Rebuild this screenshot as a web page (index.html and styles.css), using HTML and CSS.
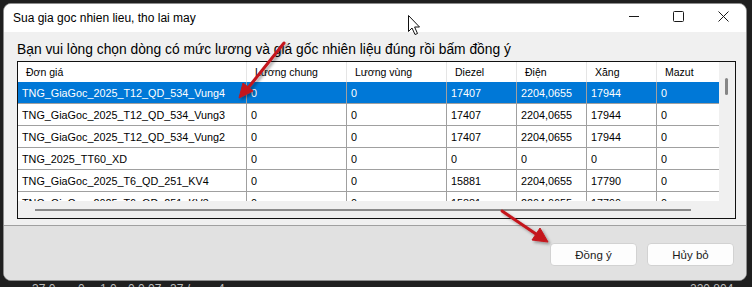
FILE: index.html
```html
<!DOCTYPE html>
<html lang="vi">
<head>
  <meta charset="UTF-8">
  <title>Sua gia goc nhien lieu, tho lai may</title>
  <link rel="stylesheet" href="styles.css">
</head>
<body>
  <div class="desk">
    <div class="window">
      <div class="titlebar">
        <span class="title">Sua gia goc nhien lieu, tho lai may</span>
        <div class="controls">
          <span class="ctl"><svg width="10" height="10" viewBox="0 0 10 10"><line x1="0" y1="4.5" x2="10" y2="4.5" stroke="#1a1a1a" stroke-width="1"/></svg></span>
          <span class="ctl"><svg width="11" height="11" viewBox="0 0 11 11"><rect x="0.5" y="0.5" width="10" height="10" rx="1" fill="none" stroke="#1a1a1a" stroke-width="1"/></svg></span>
          <span class="ctl"><svg width="11" height="11" viewBox="0 0 11 11"><path d="M0.5 0.5L10.5 10.5M10.5 0.5L0.5 10.5" stroke="#1a1a1a" stroke-width="1"/></svg></span>
        </div>
      </div>

      <div class="client">
        <p class="hint">Bạn vui lòng chọn dòng có mức lương và giá gốc nhiên liệu đúng rồi bấm đồng ý</p>
        <div class="grid">
          <div class="viewport">
            <table>
              <colgroup>
                <col class="c-name"><col class="c-wide"><col class="c-wide">
                <col class="c-num"><col class="c-num"><col class="c-num"><col class="c-num">
              </colgroup>
              <thead>
                <tr><th>Đơn giá</th><th>Lương chung</th><th>Lương vùng</th><th>Diezel</th><th>Điện</th><th>Xăng</th><th>Mazut</th></tr>
              </thead>
              <tbody>
                <tr class="selected"><td>TNG_GiaGoc_2025_T12_QD_534_Vung4</td><td>0</td><td>0</td><td>17407</td><td>2204,0655</td><td>17944</td><td>0</td></tr>
                <tr><td>TNG_GiaGoc_2025_T12_QD_534_Vung3</td><td>0</td><td>0</td><td>17407</td><td>2204,0655</td><td>17944</td><td>0</td></tr>
                <tr><td>TNG_GiaGoc_2025_T12_QD_534_Vung2</td><td>0</td><td>0</td><td>17407</td><td>2204,0655</td><td>17944</td><td>0</td></tr>
                <tr><td>TNG_2025_TT60_XD</td><td>0</td><td>0</td><td>0</td><td>0</td><td>0</td><td>0</td></tr>
                <tr><td>TNG_GiaGoc_2025_T6_QD_251_KV4</td><td>0</td><td>0</td><td>15881</td><td>2204,0655</td><td>17790</td><td>0</td></tr>
                <tr><td>TNG_GiaGoc_2025_T6_QD_251_KV3</td><td>0</td><td>0</td><td>15881</td><td>2204,0655</td><td>17790</td><td>0</td></tr>
              </tbody>
            </table>
          </div>
          <div class="vscroll"><span class="thumb-v"></span></div>
          <div class="hscroll"><span class="thumb-h"></span></div>
          <div class="corner"></div>
        </div>
      </div>

      <div class="footer">
        <button class="btn">Đồng ý</button>
        <button class="btn">Hủy bỏ</button>
      </div>
    </div>

    <div class="behind">
      <span class="w1">37 0</span><span class="w2">0</span><span class="w3">1 0</span><span class="w4">0 0 07</span><span class="w5">37 /</span><span class="w6">4</span><span class="w7">220,804</span>
    </div>

    <!-- annotation arrows and mouse pointer drawn over the screenshot -->
    <svg class="marks" width="752" height="287" viewBox="0 0 752 287">
      <defs>
        <filter id="shade" x="-20%" y="-20%" width="140%" height="140%">
          <feDropShadow dx="2" dy="2" stdDeviation="1.6" flood-color="#000" flood-opacity="0.35"/>
        </filter>
      </defs>
      <g filter="url(#shade)" fill="#c4151c" stroke="#c4151c">
        <line x1="284" y1="43" x2="248" y2="88" stroke-width="3" stroke-linecap="round"/>
        <polygon points="239,98 243,83 253,91" stroke-width="1" stroke-linejoin="round"/>
        <line x1="502" y1="211" x2="536" y2="234" stroke-width="3" stroke-linecap="round"/>
        <polygon points="548,242 532,240 540,228" stroke-width="1" stroke-linejoin="round"/>
      </g>
      <path d="M408.5 15.5 L408.5 31.5 L412 28 L415 34.5 L417.5 33.5 L414.6 27 L419.5 27 Z" fill="#fff" stroke="#111" stroke-width="1" stroke-linejoin="round"/>
    </svg>
  </div>
</body>
</html>
```

FILE: styles.css
```css
body {
  margin: 0;
  background-color: #1f1f1f;
  font-family: "Liberation Sans", Arial, sans-serif;
  color: #000;
}
.desk {
  position: relative;
  width: 752px;
  height: 287px;
  overflow: hidden;
  padding: 3px 0 0 3px;
  box-sizing: border-box;
}
.window {
  width: 744px;
  height: 278px;
  box-sizing: border-box;
  border: 1px solid #8c8c8c;
  border-radius: 8px;
  background-color: #f0f0f0;
  overflow: hidden;
  display: flex;
  flex-direction: column;
}
.titlebar {
  height: 28px;
  flex: none;
  background-color: #fff;
  display: flex;
  align-items: flex-start;
}
.title {
  font-size: 12px;
  line-height: 28px;
  padding-left: 9px;
}
.controls {
  margin-left: auto;
  display: flex;
}
.ctl {
  width: 45px;
  height: 25px;
  display: flex;
  align-items: center;
  justify-content: center;
}
.client {
  height: 193px;
  flex: none;
  padding-left: 13px;
}
.hint {
  margin: 10px 0 3px;
  font-size: 13.8px;
  line-height: 16px;
  white-space: nowrap;
}
.grid {
  width: 719px;
  height: 158px;
  box-sizing: border-box;
  border: 1px solid #111;
  display: grid;
  grid-template-columns: 701px 16px;
  grid-template-rows: 139px 17px;
  background-color: #f0f0f0;
}
.viewport {
  overflow: hidden;
  background-color: #fff;
}
table {
  border-collapse: separate;
  border-spacing: 0;
  table-layout: fixed;
  width: 709px;
  font-size: 10.8px;
}
.c-name { width: 229px; }
.c-wide { width: 100px; }
.c-num { width: 70px; }
th, td {
  box-sizing: border-box;
  text-align: left;
  font-weight: normal;
  white-space: nowrap;
  overflow: hidden;
}
th {
  height: 20px;
  padding: 0 0 0 8px;
  font-size: 10.5px;
  border-right: 1px solid #e5e5e5;
}
td {
  height: 22px;
  padding: 1px 0 0 4px;
  border-right: 1px solid #a0a0a0;
  border-bottom: 1px solid #a0a0a0;
}
.selected td {
  background-color: #0078d7;
  color: #fff;
}
.vscroll {
  position: relative;
}
.thumb-v {
  position: absolute;
  left: 6px;
  top: 16px;
  width: 3px;
  height: 17px;
  border-radius: 2px;
  background-color: #868686;
}
.hscroll {
  position: relative;
}
.thumb-h {
  position: absolute;
  left: 17px;
  top: 8px;
  width: 656px;
  height: 2px;
  background-color: #8a8a8a;
}
.footer {
  flex: 1;
  border-top: 1px solid #a0a0a0;
  background-color: #e1e1e1;
  display: flex;
  justify-content: flex-end;
  align-items: flex-start;
  gap: 10px;
  padding: 17px 12px 0 0;
}
.btn {
  width: 87px;
  height: 23px;
  border: 1px solid #d2d2d2;
  border-radius: 4px;
  background-color: #fdfdfd;
  font-family: "Liberation Sans", Arial, sans-serif;
  font-size: 11.5px;
  color: #1a1a1a;
  padding: 0;
}
.behind {
  height: 6px;
  overflow: hidden;
  display: flex;
  font-size: 12px;
  line-height: 14px;
  color: #bdbdbd;
  padding-top: 1px;
  white-space: nowrap;
}
.w1 { margin-left: 29px; width: 46px; }
.w2 { width: 22px; }
.w3 { width: 28px; }
.w4 { width: 42px; }
.w5 { width: 48px; }
.w6 { width: 472px; }
.marks {
  position: absolute;
  left: 0;
  top: 0;
  pointer-events: none;
}
```
